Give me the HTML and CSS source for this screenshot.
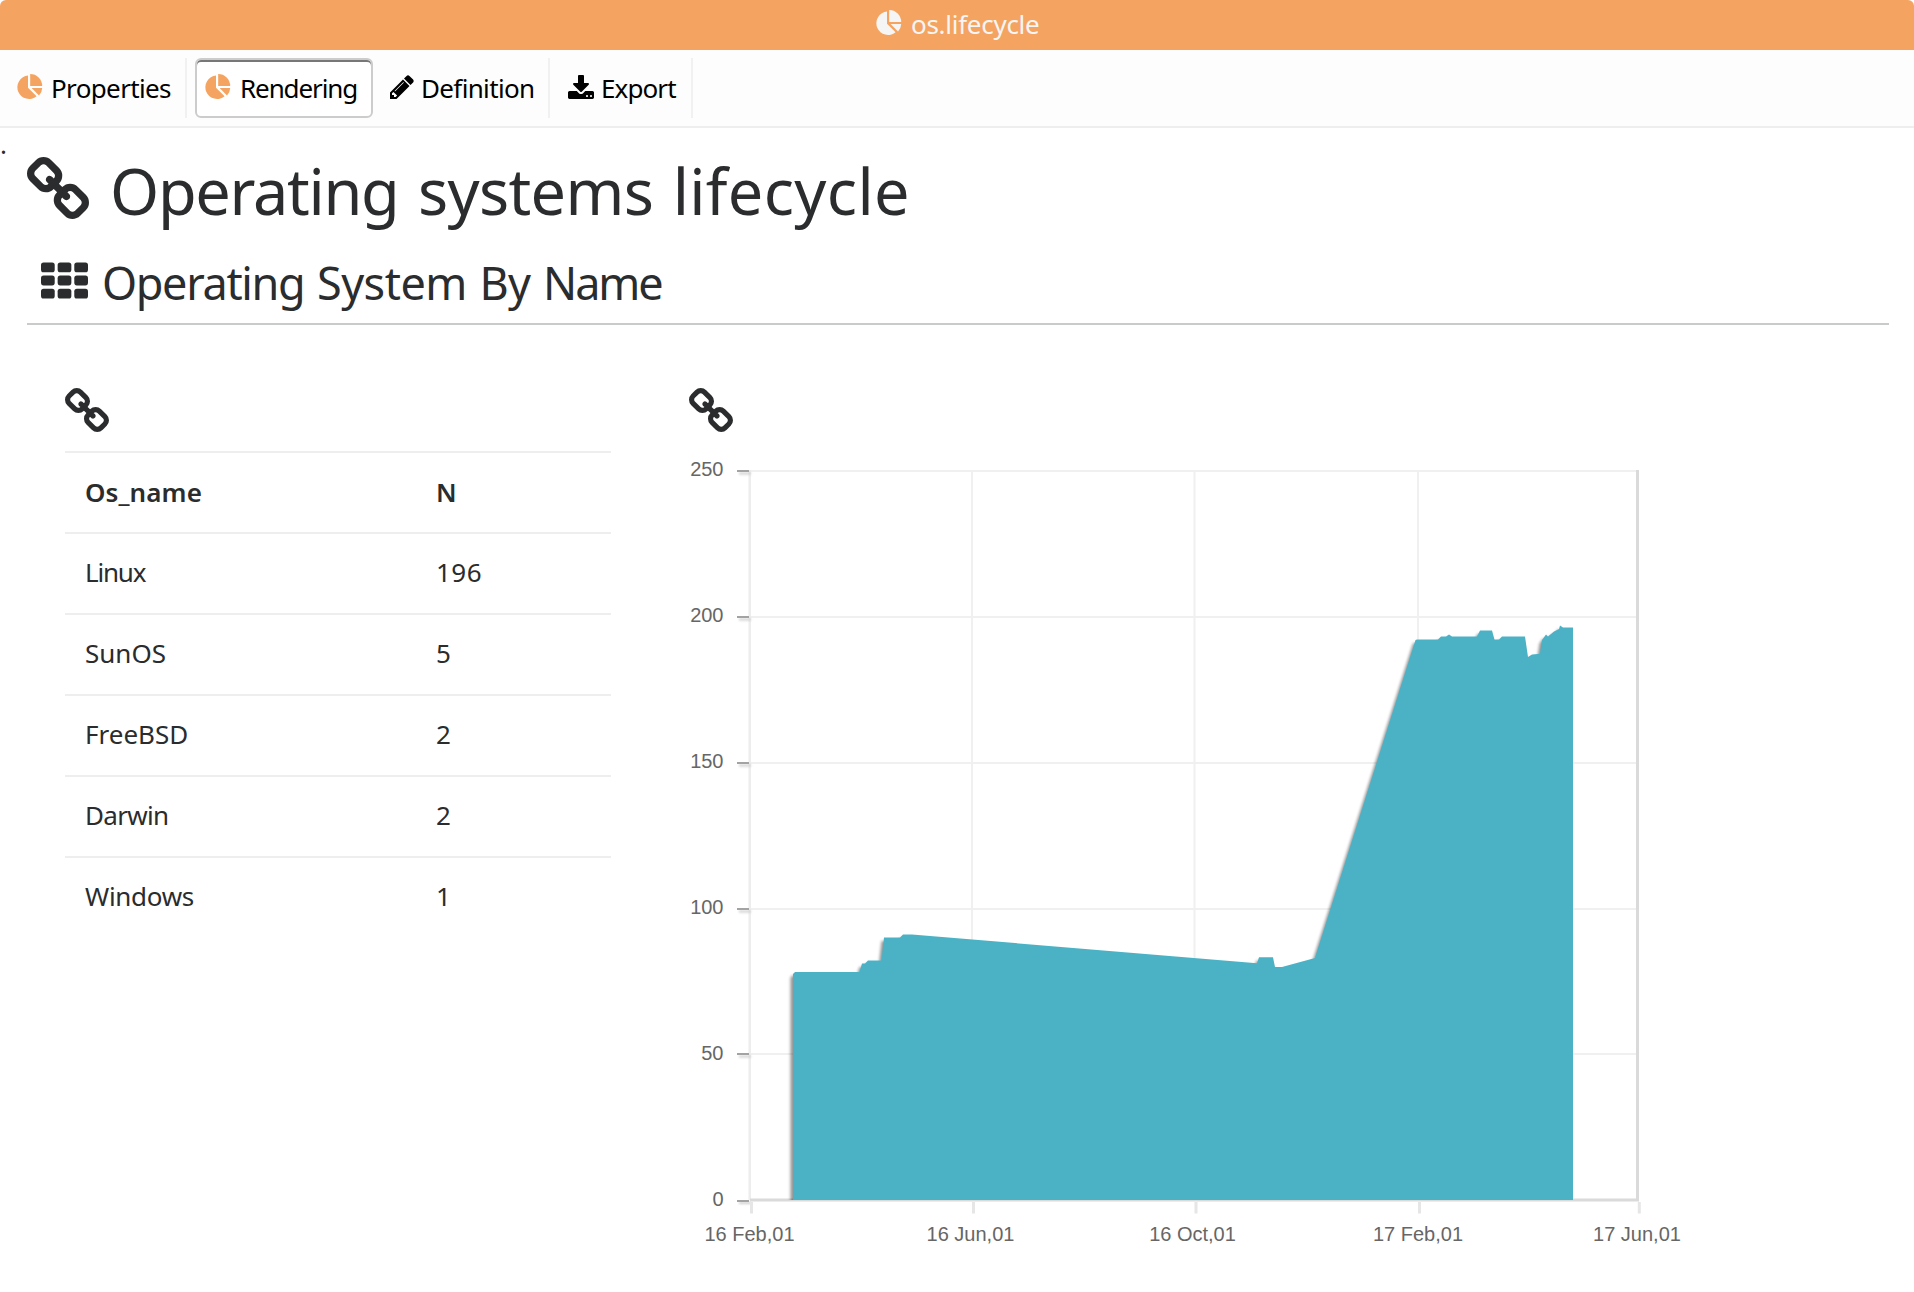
FILE: index.html
```html
<!DOCTYPE html>
<html lang="en">
<head>
<meta charset="utf-8">
<title>os.lifecycle</title>
<link rel="stylesheet" href="styles.css">
</head>
<body>
<svg class="defs" aria-hidden="true">
  <symbol id="pie" viewBox="0 0 27 27">
    <path d="M12 2.600V14.700L20.600 23.200A11.700 11.700 0 1 1 12 2.600Z"/>
    <path d="M14.200 1A12 12 0 0 1 26.200 12.900H14.200Z"/>
    <path d="M15.600 15H26.200A11.800 11.800 0 0 1 23 22.600Z"/>
  </symbol>
  <symbol id="link" viewBox="16 16 1632 1632">
    <path d="M1456 1216q0-40-28-68l-208-208q-28-28-68-28-42 0-72 32 3 3 19 18.500t21.500 21.500 15 19 13 25.500 3.500 27.500q0 40-28 68t-68 28q-15 0-27.500-3.500t-25.500-13-19-15-21.500-21.500-18.500-19q-33 31-33 73 0 40 28 68l206 207q27 27 68 27 40 0 68-26l147-146q28-28 28-67zm-703-705q0-40-28-68l-206-207q-28-28-68-28-39 0-68 27l-147 146q-28 28-28 67 0 40 28 68l208 208q27 27 68 27 42 0 72-31-3-3-19-18.500t-21.500-21.500-15-19-13-25.500-3.500-27.500q0-40 28-68t68-28q15 0 27.500 3.500t25.500 13 19 15 21.500 21.500 18.500 19q33-31 33-73zm895 705q0 120-85 203l-147 146q-83 83-203 83-121 0-204-85l-206-207q-83-83-83-203 0-123 88-209l-88-88q-86 88-208 88-120 0-204-84l-208-208q-84-84-84-204t85-203l147-146q83-83 203-83 121 0 204 85l206 207q83 83 83 203 0 123-88 209l88 88q86-88 208-88 120 0 204 84l208 208q84 84 84 204z"/>
  </symbol>
  <symbol id="pencil" viewBox="128 128 1536 1536">
    <path d="M491 1536l91-91-235-235-91 91v107h128v128h107zm523-928q0-22-22-22-10 0-17 7l-542 542q-7 7-7 17 0 22 22 22 10 0 17-7l542-542q7-7 7-17zm-54-192l416 416-832 832h-416v-416zm683 96q0 53-37 90l-166 166-416-416 166-165q36-38 90-38 53 0 91 38l235 234q37 39 37 91z"/>
  </symbol>
  <symbol id="download" viewBox="64 0 1664 1536">
    <path d="M1344 1344q0-26-19-45t-45-19-45 19-19 45 19 45 45 19 45-19 19-45zm256 0q0-26-19-45t-45-19-45 19-19 45 19 45 45 19 45-19 19-45zm128-224v320q0 40-28 68t-68 28h-1472q-40 0-68-28t-28-68v-320q0-40 28-68t68-28h465l135 136q58 56 136 56t136-56l136-136h464q40 0 68 28t28 68zm-325-569q17 41-14 70l-448 448q-18 19-45 19t-45-19l-448-448q-31-29-14-70 17-39 59-39h256v-448q0-26 19-45t45-19h256q26 0 45 19t19 45v448h256q42 0 59 39z"/>
  </symbol>
  <symbol id="grid" viewBox="0 0 48 37">
    <rect x="0" y="0" width="14" height="10" rx="2.600"/><rect x="17" y="0" width="14" height="10" rx="2.600"/><rect x="34" y="0" width="14" height="10" rx="2.600"/>
    <rect x="0" y="13.500" width="14" height="10" rx="2.600"/><rect x="17" y="13.500" width="14" height="10" rx="2.600"/><rect x="34" y="13.500" width="14" height="10" rx="2.600"/>
    <rect x="0" y="27" width="14" height="10" rx="2.600"/><rect x="17" y="27" width="14" height="10" rx="2.600"/><rect x="34" y="27" width="14" height="10" rx="2.600"/>
  </symbol>
</svg>

<header class="titlebar">
  <svg class="icon-pie"><use href="#pie"/></svg>
  <span>os.lifecycle</span>
</header>

<nav class="toolbar">
  <a class="tab tab-properties"><svg class="icon-pie"><use href="#pie"/></svg><span>Properties</span></a>
  <a class="tab tab-rendering active"><svg class="icon-pie"><use href="#pie"/></svg><span>Rendering</span></a>
  <a class="tab tab-definition"><svg class="icon-pencil"><use href="#pencil"/></svg><span>Definition</span></a>
  <a class="tab tab-export"><svg class="icon-download"><use href="#download"/></svg><span>Export</span></a>
</nav>

<main>
  <p class="lead">.</p>
  <h1><svg class="icon-title"><use href="#link"/></svg><span class="words"><span class="w-operating">Operating</span> <span class="w-systems">systems</span> <span class="w-lifecycle">lifecycle</span></span></h1>
  <h2><svg class="icon-grid"><use href="#grid"/></svg><span class="words"><span class="w-operating">Operating</span> <span class="w-system">System</span> By <span class="w-name">Name</span></span></h2>
  <div class="panels">
    <section>
      <svg class="icon-link"><use href="#link"/></svg>
      <table>
        <thead><tr><th><span class="t-head">Os_name</span></th><th>N</th></tr></thead>
        <tbody>
          <tr><td><span class="t-linux">Linux</span></td><td><span class="t-num">196</span></td></tr>
          <tr><td>SunOS</td><td>5</td></tr>
          <tr><td>FreeBSD</td><td>2</td></tr>
          <tr><td><span class="t-darwin">Darwin</span></td><td>2</td></tr>
          <tr><td><span class="t-windows">Windows</span></td><td>1</td></tr>
        </tbody>
      </table>
    </section>
    <section>
      <svg class="icon-link"><use href="#link"/></svg>
      <svg class="chart" viewBox="689 440 1010 820">
        <defs>
          <filter id="soft" x="-5%" y="-5%" width="110%" height="110%"><feGaussianBlur stdDeviation="1.800"/></filter>
          <filter id="tick" x="-50%" y="-300%" width="200%" height="700%"><feGaussianBlur stdDeviation="1.200"/></filter>
          <clipPath id="plot"><rect x="750" y="470" width="888" height="730"/></clipPath>
          <path id="area" d="M793 1210V974L795 972H859.500L862 963.500H865L868 960.500H881.500L884 937.500H900L903 934.500H912L1257 963.300L1259 957.300H1273L1275 967H1282L1315 958L1415.500 640L1417 639.500H1438L1441 636.500H1446L1449 634.500L1452 636.500H1477L1480 630.500H1492L1494.500 639.500H1499L1502 636.500H1525L1528 657L1532 654.500L1540 653.800L1542 640L1546 634.500L1548 636.500L1554 631.500L1559 629L1560 625.500L1563 627.500H1573V1210Z"/>
        </defs>
        <path class="gridline" d="M750 471H1637M750 617H1637M750 763H1637M750 909H1637M750 1054H1637M972 471V1200M1194.500 471V1200M1418 471V1200"/>
        <path class="axis-left" d="M749.700 470V1200"/>
        <path class="tick-shadow" filter="url(#tick)" d="M739 473.500H751M739 619.500H751M739 765.500H751M739 911.500H751M739 1056.500H751M739 1203H751"/>
        <path class="ytick" d="M737 471H749M737 617H749M737 763H749M737 909H749M737 1054H749M737 1201H749"/>
        <path class="xtick" d="M751.500 1202V1213.500M973.500 1202V1213.500M1196 1202V1213.500M1419.500 1202V1213.500M1639.300 1202V1213.500"/>
        <path class="frame" d="M750 1200H1637.500V470"/>
        <g clip-path="url(#plot)">
          <use class="shadow" href="#area" transform="translate(-2.500 3.500)" filter="url(#soft)"/>
          <use class="area" href="#area"/>
        </g>
        <g class="label ylabel">
          <text x="723.500" y="476">250</text><text x="723.500" y="622">200</text><text x="723.500" y="768">150</text>
          <text x="723.500" y="914">100</text><text x="723.500" y="1060">50</text><text x="723.500" y="1206">0</text>
        </g>
        <g class="label xlabel">
          <text x="749.500" y="1241">16 Feb,01</text><text x="970.500" y="1241">16 Jun,01</text><text x="1192.500" y="1241">16 Oct,01</text>
          <text x="1418" y="1241">17 Feb,01</text><text x="1637" y="1241">17 Jun,01</text>
        </g>
      </svg>
    </section>
  </div>
</main>
</body>
</html>
```
FILE: styles.css
```css
* { box-sizing: border-box; }
html { background: #fff; }
body {
  margin: 0;
  height: 1292px;
  overflow: hidden;
  color: #2a2c2d;
  font: 26px/32px "Noto Sans", sans-serif;
}
svg { display: block; flex: none; fill: currentColor; }
.defs { position: absolute; width: 0; height: 0; }

.icon-pie { width: 27px; height: 27px; }
.icon-pencil { width: 24px; height: 24px; }
.icon-download { width: 26px; height: 24px; }
.icon-title { width: 62px; height: 62px; }
.icon-grid { width: 47px; height: 37px; }
.icon-link { width: 44px; height: 44px; }

.titlebar {
  display: flex;
  align-items: center;
  gap: 9px;
  height: 50px;
  padding: 0 0 2px 875px;
  border-radius: 6px 6px 0 0;
  background: #f4a460;
  color: #f5f5f5;
  letter-spacing: -0.28px;
}
.titlebar svg { margin-bottom: 3px; }

.toolbar {
  display: flex;
  align-items: center;
  height: 78px;
  border-bottom: 2px solid #eee;
  background: #fdfdfd;
  color: #000;
}
.tab {
  display: flex;
  align-items: center;
  height: 60px;
  border-right: 2px solid #f1f1f1;
}
.tab svg { margin-bottom: 3px; }
.tab .icon-pie { color: #f4a460; }
.tab-properties { width: 187px; padding-left: 16px; gap: 8px; letter-spacing: -0.64px; }
.tab-rendering { width: 178px; margin-left: 8px; padding-left: 7px; gap: 9px; letter-spacing: -1.1px; }
.tab-definition { width: 177px; padding-left: 17px; gap: 7px; letter-spacing: -0.65px; }
.tab-export { width: 143px; padding-left: 18px; gap: 7px; letter-spacing: -0.9px; }
.tab.active {
  border: 2px solid #ccc;
  border-radius: 6px;
  background: #fff;
  box-shadow: inset 0 2px 0 #777;
}

.lead { height: 24px; margin: 0; }
h1, h2 { display: flex; margin: 0; font-weight: 400; }
h1 {
  gap: 21px;
  height: 100px;
  padding-left: 27px;
  font-size: 63px;
  line-height: 78px;
}
h1 svg { margin-top: 5px; }
h1 .words { word-spacing: 3px; }
h1 .w-operating { letter-spacing: -1.3px; }
h1 .w-systems { letter-spacing: -0.65px; }
h1 .w-lifecycle { letter-spacing: 0.35px; }
h2 {
  gap: 14px;
  height: 73px;
  margin: 0 25px 0 27px;
  padding-left: 14px;
  border-bottom: 2px solid #c9cbcb;
  font-size: 45px;
  line-height: 62px;
}
h2 svg { margin-top: 10px; }
h2 .words { word-spacing: 1.5px; letter-spacing: -0.6px; }
h2 .w-operating { letter-spacing: -1.35px; }
h2 .w-system { letter-spacing: -0.5px; }
h2 .w-name { letter-spacing: -2.1px; }

.panels {
  display: grid;
  grid-template-columns: 546px 1010px;
  column-gap: 78px;
  padding: 63px 0 0 65px;
}
table {
  width: 546px;
  margin-top: 19px;
  border-collapse: separate;
  border-spacing: 0;
  table-layout: fixed;
}
th, td {
  height: 81px;
  padding: 0 0 3px 20px;
  border-top: 2px solid #eee;
  text-align: left;
}
th { padding-bottom: 1px; font-weight: 600; }
th:first-child { width: 351px; }
.t-head { letter-spacing: 0.1px; }
.t-linux { letter-spacing: -1.2px; }
.t-darwin { letter-spacing: -0.7px; }
.t-windows { letter-spacing: -0.3px; }
.t-num { letter-spacing: 0.5px; }

.chart { width: 1010px; height: 820px; margin-top: 8px; }
.chart path { fill: none; }
.chart .gridline { stroke: #f0f0f0; stroke-width: 2; }
.chart .axis-left { stroke: #ededed; stroke-width: 2.5; }
.chart .ytick { stroke: #a3a3a3; stroke-width: 2; }
.chart .tick-shadow { stroke: #ccc; stroke-width: 2; }
.chart .xtick { stroke: #e6e6e6; stroke-width: 3; }
.chart .frame { stroke: #dadada; stroke-width: 3; }
.chart #area { fill: inherit; }
.chart .area { fill: #4bb2c5; }
.chart .shadow { fill: #000; opacity: 0.42; }
.label { fill: #666; font: 20px "Liberation Sans", Arial, sans-serif; }
.ylabel { text-anchor: end; }
.xlabel { text-anchor: middle; }
```
